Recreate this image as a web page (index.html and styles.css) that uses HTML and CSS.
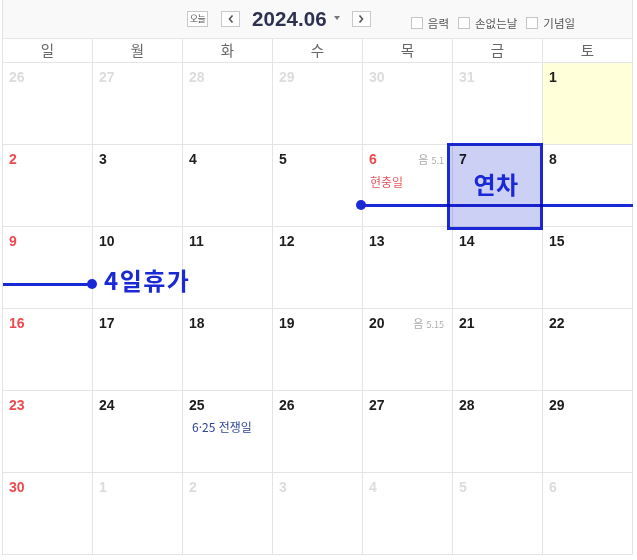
FILE: index.html
```html
<!DOCTYPE html>
<html lang="ko">
<head>
<meta charset="utf-8">
<title>2024.06 달력</title>
<link rel="stylesheet" href="styles.css">
</head>
<body>
<div class="cal">
  <div class="toolbar">
    <button class="btn btn-today">오늘</button>
    <button class="btn btn-arrow prev"><svg width="8" height="10" viewBox="0 0 8 10"><path d="M5.5 1.5 L2.5 5 L5.5 8.5" fill="none" stroke="#555" stroke-width="1.6"/></svg></button>
    <span class="title">2024.06</span>
    <span class="caret"></span>
    <button class="btn btn-arrow next"><svg width="8" height="10" viewBox="0 0 8 10"><path d="M2.5 1.5 L5.5 5 L2.5 8.5" fill="none" stroke="#555" stroke-width="1.6"/></svg></button>
    <div class="opts">
      <label class="opt"><span class="box"></span>음력</label>
      <label class="opt"><span class="box"></span>손없는날</label>
      <label class="opt"><span class="box"></span>기념일</label>
    </div>
  </div>
  <div class="grid">
    <div class="dow">일</div><div class="dow">월</div><div class="dow">화</div><div class="dow">수</div><div class="dow">목</div><div class="dow">금</div><div class="dow">토</div>

    <div class="cell"><span class="num other">26</span></div>
    <div class="cell"><span class="num other">27</span></div>
    <div class="cell"><span class="num other">28</span></div>
    <div class="cell"><span class="num other">29</span></div>
    <div class="cell"><span class="num other">30</span></div>
    <div class="cell"><span class="num other">31</span></div>
    <div class="cell today"><span class="num">1</span></div>

    <div class="cell"><span class="num sun">2</span></div>
    <div class="cell"><span class="num">3</span></div>
    <div class="cell"><span class="num">4</span></div>
    <div class="cell"><span class="num">5</span></div>
    <div class="cell"><div class="top"><span class="num sun">6</span><span class="lunar">음 <small>5.1</small></span></div><span class="holiday">현충일</span></div>
    <div class="cell"><span class="num">7</span></div>
    <div class="cell"><span class="num">8</span></div>

    <div class="cell"><span class="num sun">9</span></div>
    <div class="cell"><span class="num">10</span></div>
    <div class="cell"><span class="num">11</span></div>
    <div class="cell"><span class="num">12</span></div>
    <div class="cell"><span class="num">13</span></div>
    <div class="cell"><span class="num">14</span></div>
    <div class="cell"><span class="num">15</span></div>

    <div class="cell"><span class="num sun">16</span></div>
    <div class="cell"><span class="num">17</span></div>
    <div class="cell"><span class="num">18</span></div>
    <div class="cell"><span class="num">19</span></div>
    <div class="cell"><div class="top"><span class="num">20</span><span class="lunar">음 <small>5.15</small></span></div></div>
    <div class="cell"><span class="num">21</span></div>
    <div class="cell"><span class="num">22</span></div>

    <div class="cell"><span class="num sun">23</span></div>
    <div class="cell"><span class="num">24</span></div>
    <div class="cell"><span class="num">25</span><span class="memo">6·25 전쟁일</span></div>
    <div class="cell"><span class="num">26</span></div>
    <div class="cell"><span class="num">27</span></div>
    <div class="cell"><span class="num">28</span></div>
    <div class="cell"><span class="num">29</span></div>

    <div class="cell"><span class="num sun">30</span></div>
    <div class="cell"><span class="num other">1</span></div>
    <div class="cell"><span class="num other">2</span></div>
    <div class="cell"><span class="num other">3</span></div>
    <div class="cell"><span class="num other">4</span></div>
    <div class="cell"><span class="num other">5</span></div>
    <div class="cell"><span class="num other">6</span></div>
  </div>

  <div class="mark-line line-a"></div>
  <div class="mark-dot dot-a"></div>
  <div class="mark-box"><span class="mark-label">연차</span></div>
  <div class="mark-line line-b"></div>
  <div class="mark-dot dot-b"></div>
  <div class="mark-text text-b">4일휴가</div>
</div>
</body>
</html>
```

FILE: styles.css
```css
* { box-sizing: border-box; }
html, body { margin: 0; padding: 0; background: #fff; }
body { font-family: "Liberation Sans", "Noto Sans CJK KR", sans-serif; color: #222; }

.cal { position: relative; margin-left: 2px; width: 631px; }

.toolbar {
  height: 38px;
  background: #f9f9f9;
  border-left: 1px solid #e3e3e3;
  border-right: 1px solid #e3e3e3;
  display: flex;
  align-items: center;
  padding-left: 184px;
}
.btn {
  height: 16px;
  padding: 0;
  margin: 0;
  border: 1px solid #c9c9c9;
  background: #fff;
  display: inline-flex;
  align-items: center;
  justify-content: center;
  font-family: "Noto Sans CJK KR", sans-serif;
  font-size: 9px;
  color: #555;
  line-height: 1;
  margin-top: -1px;
}
.btn-today { width: 21px; letter-spacing: -0.5px; }
.btn-arrow { width: 19px; }
.prev { margin-left: 13px; }
.title {
  margin-left: 12px;
  font-family: "Liberation Sans", sans-serif;
  font-weight: bold;
  font-size: 20.5px;
  color: #2e3252;
  line-height: 1;
  letter-spacing: 0.1px;
}
.caret {
  margin-left: 7px;
  width: 0; height: 0;
  border-left: 3.5px solid transparent;
  border-right: 3.5px solid transparent;
  border-top: 4px solid #777;
  margin-top: -2px;
}
.next { margin-left: 12px; }
.opts { display: flex; align-items: center; margin-left: 40px; margin-top: 7px; }
.opt {
  display: flex; align-items: center;
  font-family: "Noto Sans CJK KR", sans-serif;
  font-size: 11.5px;
  color: #555;
  margin-right: 9px;
}
.box { width: 12px; height: 12px; border: 1px solid #c5c5c5; background: #fff; margin-right: 5px; }

.grid {
  display: grid;
  grid-template-columns: repeat(7, 89px);
  grid-template-rows: 23px repeat(6, 81px);
  gap: 1px;
  padding: 1px;
  background: #e4e4e4;
}
.dow {
  background: #fff;
  font-family: "Noto Sans CJK KR", sans-serif;
  font-size: 14.5px;
  color: #666;
  display: flex; align-items: center; justify-content: center;
  line-height: 1;
}
.cell { background: #fff; padding: 6px 7px 0 6px; display: flex; flex-direction: column; }
.cell.today { background: #ffffd9; }
.top { display: flex; justify-content: space-between; align-items: baseline; }
.num { font-weight: bold; font-size: 14px; line-height: 16px; color: #1e1e1e; }
.num.other { color: #dcdcdc; }
.num.sun { color: #ec4a4f; }
.lunar { font-family: "Noto Sans CJK KR", sans-serif; font-size: 11px; color: #aaa; margin-right: 1px; }
.lunar small { font-size: 9px; }
.holiday { font-family: "Noto Sans CJK KR", sans-serif; font-size: 12px; color: #e2585a; margin-top: 6px; margin-left: 1px; }
.memo { font-family: "Noto Sans CJK KR", sans-serif; font-size: 12px; color: #2b4596; margin-top: 5px; margin-left: 3px; }

.mark-box {
  position: absolute;
  left: 445px; top: 143px;
  width: 96px; height: 87px;
  border: 3px solid #1a29d6;
  background: #cdd0f5;
  mix-blend-mode: multiply;
  display: flex; justify-content: center;
}
.mark-label {
  margin-top: 24px;
  margin-left: 2px;
  font-family: "Noto Sans CJK KR", sans-serif;
  font-weight: bold;
  font-size: 24px;
  line-height: 1.2;
  color: #1a29d6;
  letter-spacing: 0.5px;
}
.mark-line { position: absolute; height: 3px; background: #1a29d6; }
.line-a { left: 359px; top: 204px; width: 272px; }
.line-b { left: 1px; top: 283px; width: 89px; }
.mark-dot { position: absolute; width: 10px; height: 10px; border-radius: 50%; background: #1a29d6; }
.dot-a { left: 354px; top: 200px; }
.dot-b { left: 85px; top: 279px; }
.mark-text {
  position: absolute;
  font-family: "Noto Sans CJK KR", sans-serif;
  font-weight: bold;
  font-size: 24px;
  line-height: 1.2;
  color: #1a29d6;
  letter-spacing: 1.5px;
}
.text-b { left: 102px; top: 266px; }
```
